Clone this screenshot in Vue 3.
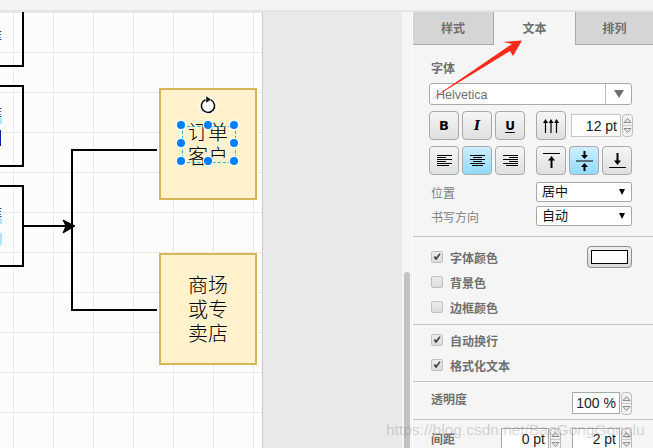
<template>
  <div class="page">
    <svg class="defs" width="0" height="0">
      <symbol id="spin" viewBox="0 0 11 23">
        <rect x="0.5" y="0.5" width="10" height="22" rx="3" fill="#f1f1f1" stroke="#bdbdbd" />
        <line x1="1" y1="11.5" x2="10" y2="11.5" stroke="#c8c8c8" />
        <path d="M5.5 4.5 L9 8.5 H2 Z" fill="#e6e6e6" stroke="#777" stroke-width="0.8" />
        <path d="M5.5 18.5 L9 14.5 H2 Z" fill="#e6e6e6" stroke="#777" stroke-width="0.8" />
      </symbol>
      <symbol id="tick" viewBox="0 0 12 12">
        <path d="M2.5 6.5 L5 9.5 L10 2.5 L8.8 2 L5 7 L3.6 5.2 Z" fill="#3c3c3c" stroke="#3c3c3c" stroke-width="0.7" />
      </symbol>
    </svg>

    <div class="topbar"></div>

    <div class="main">
      <div class="canvas">
        <div class="frag-box frag-one">
          <span class="cut-text cut-one">库</span>
        </div>
        <div class="frag-box frag-two">
          <span class="cut-text cut-two">库</span>
          <i class="mark mark-cyan mark-a"></i>
          <i class="mark mark-navy mark-b"></i>
        </div>
        <div class="frag-box frag-three">
          <span class="cut-text cut-two">库</span>
          <i class="mark mark-cyan mark-a"></i>
          <i class="mark mark-cyan mark-c"></i>
        </div>

        <svg class="wires" width="262" height="436" viewBox="0 0 262 436">
          <path d="M157 138 H72 V298 H157" fill="none" stroke="#000" stroke-width="2" />
          <path d="M24 214 H66" fill="none" stroke="#000" stroke-width="2" />
          <path d="M75 214 L63 208 L66 214 L63 221 Z" fill="#000" stroke="#000" />
        </svg>

        <div v-for="n in nodes" :key="n.id" class="node" :style="{ top: n.top + 'px' }">
          <span v-for="line in n.lines" :key="line">{{ line }}</span>
        </div>

        <div class="selection">
          <i v-for="h in handles" :key="h.id" class="handle" :style="{ left: h.x + 'px', top: h.y + 'px' }"></i>
        </div>

        <svg class="rotate" width="20" height="20" viewBox="0 0 20 20">
          <circle cx="10" cy="10.5" r="9" fill="#fff" opacity="0.9" />
          <path d="M7.4 4.8 A6.6 6.6 0 1 0 12.8 4.9" fill="none" stroke="#111" stroke-width="1.6" />
          <path d="M8.2 1.2 L13 4.4 L8.2 7.8 Z" fill="#111" />
        </svg>
      </div>

      <div class="gutter"></div>
      <div class="track"><div class="thumb"></div></div>

      <div class="panel">
        <div class="tabs">
          <div class="tab tab-first">样式</div>
          <div class="tab tab-active">文本</div>
          <div class="tab tab-last">排列</div>
        </div>

        <section class="sec sec-font">
          <div class="head">字体</div>
          <div class="font-select">
            <span class="font-name">Helvetica</span>
            <span class="font-drop"><i class="tri-big"></i></span>
          </div>

          <div class="tools tools-first">
            <div class="group">
              <button class="btn btn-b">B</button>
              <button class="btn btn-i">I</button>
              <button class="btn btn-u">U</button>
            </div>
            <div class="group group-right">
              <button class="btn">
                <svg width="16" height="16" viewBox="0 0 16 16">
                  <g fill="none" stroke="#000" stroke-width="1.2">
                    <path d="M2.5 15 V3 M8 15 V3 M13.5 15 V3" />
                  </g>
                  <path d="M2.5 1 L5 5 H0 Z M8 1 L10.5 5 H5.5 Z M13.5 1 L16 5 H11 Z" fill="#000" />
                </svg>
              </button>
              <div class="num num-size">12 pt</div>
              <svg class="spin" width="11" height="23"><use href="#spin" /></svg>
            </div>
          </div>

          <div class="tools">
            <div class="group">
              <button class="btn">
                <svg width="15" height="12" viewBox="0 0 15 12">
                  <path d="M0 .5 H15 M0 2.5 H9 M0 4.5 H15 M0 6.5 H9 M0 8.5 H15 M0 10.5 H12" stroke="#000" fill="none" />
                </svg>
              </button>
              <button class="btn btn-on">
                <svg width="15" height="12" viewBox="0 0 15 12">
                  <path d="M0 .5 H15 M3 2.5 H12 M0 4.5 H15 M3 6.5 H12 M0 8.5 H15 M2 10.5 H13" stroke="#000" fill="none" />
                </svg>
              </button>
              <button class="btn">
                <svg width="15" height="12" viewBox="0 0 15 12">
                  <path d="M0 .5 H15 M6 2.5 H15 M0 4.5 H15 M6 6.5 H15 M0 8.5 H15 M3 10.5 H15" stroke="#000" fill="none" />
                </svg>
              </button>
            </div>
            <div class="group group-right group-valign">
              <button class="btn">
                <svg width="17" height="15" viewBox="0 0 17 15">
                  <path d="M0 .5 H17" stroke="#000" fill="none" />
                  <path d="M8.5 15 V6" stroke="#000" stroke-width="2" fill="none" />
                  <path d="M8.5 3 L12 7.5 H5 Z" fill="#000" />
                </svg>
              </button>
              <button class="btn btn-on">
                <svg width="17" height="20" viewBox="0 0 17 20">
                  <path d="M0 10 H17" stroke="#000" fill="none" />
                  <path d="M8.5 0 V5 M8.5 15 V20" stroke="#000" stroke-width="2" fill="none" />
                  <path d="M8.5 8 L5 4 H12 Z M8.5 12 L12 16 H5 Z" fill="#000" />
                </svg>
              </button>
              <button class="btn">
                <svg width="17" height="15" viewBox="0 0 17 15">
                  <path d="M0 14.5 H17" stroke="#000" fill="none" />
                  <path d="M8.5 0 V9" stroke="#000" stroke-width="2" fill="none" />
                  <path d="M8.5 12 L5 7.5 H12 Z" fill="#000" />
                </svg>
              </button>
            </div>
          </div>

          <div class="pick pick-first">
            <span class="lbl">位置</span>
            <div class="combo">居中<i class="tri"></i></div>
          </div>
          <div class="pick pick-next">
            <span class="lbl">书写方向</span>
            <div class="combo">自动<i class="tri"></i></div>
          </div>
        </section>

        <section class="sec sec-colors">
          <div v-for="c in colorRows" :key="c.label" class="check-row">
            <span class="box">
              <svg v-if="c.on" width="12" height="12"><use href="#tick" /></svg>
            </span>
            <span class="check-text">{{ c.label }}</span>
            <div v-if="c.swatch" class="swatch"><i></i></div>
          </div>
        </section>

        <section class="sec sec-wrap">
          <div v-for="c in wrapRows" :key="c" class="check-row">
            <span class="box">
              <svg width="12" height="12"><use href="#tick" /></svg>
            </span>
            <span class="check-text">{{ c }}</span>
          </div>
        </section>

        <section class="sec sec-alpha">
          <span class="head">透明度</span>
          <div class="num-wrap">
            <div class="num">100 %</div>
            <svg class="spin" width="11" height="23"><use href="#spin" /></svg>
          </div>
        </section>

        <section class="sec sec-gap">
          <span class="head">间距</span>
          <div class="gap-fields">
            <div class="num-wrap">
              <div class="num">0 pt</div>
              <svg class="spin" width="11" height="23"><use href="#spin" /></svg>
            </div>
            <div class="num-wrap">
              <div class="num">2 pt</div>
              <svg class="spin" width="11" height="23"><use href="#spin" /></svg>
            </div>
          </div>
        </section>
      </div>
    </div>

    <svg class="red-arrow" width="110" height="75" viewBox="0 0 110 75">
      <path d="M0 70 L82 14 L73 12 L92 10.5 L83 26 L80 21 Z" fill="#ff2a1a" />
    </svg>

    <div class="watermark">https://blog.csdn.net/BaoGongGonglu</div>
  </div>
</template>

<script setup>
const nodes = [
  { id: 'order', top: 76, lines: ['订单', '客户'] },
  { id: 'shop', top: 241, lines: ['商场', '或专', '卖店'] },
]

const handles = [
  { id: 1, x: 0, y: 0 },
  { id: 2, x: 27, y: 0 },
  { id: 3, x: 53, y: 0 },
  { id: 4, x: 0, y: 18 },
  { id: 5, x: 53, y: 18 },
  { id: 6, x: 0, y: 36 },
  { id: 7, x: 27, y: 36 },
  { id: 8, x: 53, y: 36 },
]

const colorRows = [
  { label: '字体颜色', on: true, swatch: true },
  { label: '背景色', on: false },
  { label: '边框颜色', on: false },
]

const wrapRows = ['自动换行', '格式化文本']
</script>

<style>
html,
body {
  margin: 0;
  background: #fff;
}
</style>

<style scoped>
.page {
  position: relative;
  width: 653px;
  height: 448px;
  overflow: hidden;
  display: flex;
  flex-direction: column;
  font-family: "Liberation Sans", "Noto Sans CJK SC", sans-serif;
}

.defs {
  position: absolute;
}

.topbar {
  height: 10px;
  flex: none;
  background: #f4f4f4;
  border-bottom: 2px solid #e4e4e4;
}

.main {
  flex: 1;
  display: flex;
  min-height: 0;
}

.canvas {
  position: relative;
  width: 262px;
  flex: none;
  overflow: hidden;
  border-right: 1px solid #cdcdcd;
  background-color: #fff;
  background-image:
    linear-gradient(#e9e9e9 1px, transparent 1px),
    linear-gradient(90deg, #e9e9e9 1px, transparent 1px),
    linear-gradient(#f9f9f9 1px, transparent 1px),
    linear-gradient(90deg, #f9f9f9 1px, transparent 1px);
  background-size: 40px 40px, 40px 40px, 8px 8px, 8px 8px;
  background-position: 13px 0, 13px 0, 5px 0, 5px 0;
}

.frag-box {
  position: absolute;
  left: -10px;
  width: 30px;
  border: 2px solid #000;
  box-sizing: content-box;
}

.frag-one {
  top: -20px;
  height: 71px;
}

.frag-two {
  top: 73px;
  height: 78px;
}

.frag-three {
  top: 173px;
  height: 78px;
}

.cut-text {
  position: absolute;
  left: -2px;
  font-size: 12px;
  line-height: 14px;
  color: #00205e;
  font-family: "Noto Sans CJK SC", sans-serif;
}

.cut-one {
  top: 35px;
}

.cut-two {
  top: 19px;
}

.mark {
  position: absolute;
  left: 8px;
  width: 2px;
}

.mark-cyan {
  background: #a6e8ff;
}

.mark-navy {
  background: #0a1ea0;
  width: 1px;
}

.mark-a {
  top: 31px;
  height: 6px;
}

.mark-b {
  top: 43px;
  height: 16px;
}

.mark-c {
  top: 46px;
  height: 12px;
}

.wires {
  position: absolute;
  left: 0;
  top: 0;
}

.node {
  position: absolute;
  left: 159px;
  width: 98px;
  height: 112px;
  box-sizing: border-box;
  border: 2px solid #d6b656;
  background: #fff2cc;
  display: flex;
  flex-direction: column;
  align-items: center;
  justify-content: center;
  font-family: "Noto Sans CJK SC", sans-serif;
  font-size: 20px;
  font-weight: 300;
  line-height: 24px;
  color: #000;
}

.selection {
  position: absolute;
  left: 182px;
  top: 114px;
  width: 52px;
  height: 35px;
  border: 1px dashed #19b4ee;
}

.handle {
  position: absolute;
  width: 8px;
  height: 8px;
  margin: -6px 0 0 -6px;
  border-radius: 50%;
  background: #007fff;
  box-shadow: 0 0 0 1.5px rgba(255, 255, 255, 0.9);
}

.rotate {
  position: absolute;
  left: 198px;
  top: 83px;
}

.gutter {
  flex: 1;
  background: #e9e9e9;
}

.track {
  position: relative;
  width: 10px;
  flex: none;
  background: #f5f5f5;
  margin-right: 1px;
}

.thumb {
  position: absolute;
  left: 2px;
  right: 2px;
  top: 260px;
  bottom: 0;
  background: #c2c2c2;
  border-radius: 3px 3px 0 0;
}

.panel {
  width: 240px;
  flex: none;
  background: #f5f5f5;
  color: #707070;
  font-size: 12px;
  overflow: hidden;
}

.tabs {
  display: flex;
  height: 33px;
}

.tab {
  box-sizing: border-box;
  text-align: center;
  line-height: 35px;
  font-weight: 700;
  font-size: 12px;
  color: #707070;
  background: #d5d5d5;
  border-bottom: 1px solid #ababab;
}

.tab-first {
  width: 81px;
  border-right: 1px solid #ababab;
}

.tab-active {
  width: 81px;
  background: #f5f5f5;
  border-bottom: 0;
}

.tab-last {
  flex: 1;
  border-left: 1px solid #ababab;
}

.sec {
  padding-left: 16px;
  padding-right: 21px;
  border-bottom: 1px solid #c4c4c4;
}

.head {
  font-weight: 700;
  line-height: 16px;
  padding-left: 2px;
  color: #707070;
}

.sec-font {
  padding-top: 16px;
  padding-bottom: 10px;
}

.font-select {
  margin-top: 6px;
  height: 22px;
  box-sizing: border-box;
  display: flex;
  align-items: center;
  background: #fff;
  border: 1px solid #a9a9a9;
  border-radius: 3px;
}

.font-name {
  flex: 1;
  padding-left: 6px;
  padding-top: 2px;
  font-size: 12.5px;
  color: #707070;
}

.font-drop {
  width: 25px;
  height: 100%;
  display: flex;
  align-items: center;
  justify-content: center;
  border-left: 1px solid #bdbdbd;
}

.tri-big {
  width: 0;
  height: 0;
  border-left: 5px solid transparent;
  border-right: 5px solid transparent;
  border-top: 8px solid #707070;
}

.tools {
  display: flex;
  margin-top: 6px;
  height: 29px;
}

.group {
  display: flex;
  gap: 3px;
  align-items: center;
}

.group-right {
  margin-left: 11px;
  gap: 0;
}

.group-valign {
  gap: 3px;
}

.btn {
  width: 30px;
  height: 29px;
  padding: 0;
  box-sizing: border-box;
  display: flex;
  align-items: center;
  justify-content: center;
  border: 1px solid #a9a9a9;
  border-radius: 4px;
  background: linear-gradient(#f6f6f6, #dfdfdf);
  color: #000;
  font-size: 13px;
  line-height: 1;
}

.btn-b {
  font-family: "DejaVu Sans", sans-serif;
  font-weight: 700;
}

.btn-i {
  font-family: "DejaVu Serif", serif;
  font-weight: 700;
  font-style: italic;
}

.btn-u {
  font-family: "DejaVu Sans", sans-serif;
  font-weight: 700;
  font-size: 12px;
  text-decoration: underline;
  text-underline-offset: 2px;
}

.btn-on {
  background: linear-gradient(#cdeeff, #8fdbff);
}

.num {
  box-sizing: border-box;
  width: 48px;
  height: 22px;
  padding-right: 3px;
  background: #fff;
  border: 1px solid #a9a9a9;
  color: #1a1a1a;
  font-size: 14px;
  line-height: 21px;
  text-align: right;
}

.num-size {
  width: 50px;
  height: 23px;
  margin-left: 5px;
  line-height: 22px;
  border-color: #c6c6c6;
}

.spin {
  display: block;
  flex: none;
  margin-left: 1px;
}

.pick {
  display: flex;
  align-items: center;
  justify-content: space-between;
  padding-left: 2px;
  color: #808080;
}

.pick-first {
  margin-top: 7px;
}

.pick-next {
  margin-top: 4px;
}

.combo {
  position: relative;
  box-sizing: border-box;
  width: 96px;
  height: 20px;
  padding-left: 5px;
  background: #fff;
  border: 1px solid #a9a9a9;
  border-radius: 2px;
  color: #111;
  font-size: 13px;
  line-height: 18px;
}

.tri {
  position: absolute;
  right: 6px;
  top: 6px;
  width: 0;
  height: 0;
  border-left: 3.5px solid transparent;
  border-right: 3.5px solid transparent;
  border-top: 6px solid #000;
}

.sec-colors {
  padding-top: 7px;
  padding-bottom: 5px;
}

.sec-wrap {
  padding-top: 2px;
  padding-bottom: 4px;
}

.check-row {
  display: flex;
  align-items: center;
  height: 25px;
  padding-left: 2px;
}

.box {
  box-sizing: border-box;
  width: 12px;
  height: 12px;
  flex: none;
  display: flex;
  align-items: center;
  justify-content: center;
  border: 1px solid #c0c0c0;
  border-radius: 2px;
  background: linear-gradient(#ececec, #dcdcdc);
}

.check-text {
  margin-left: 7px;
  padding-top: 1px;
  font-weight: 700;
  color: #707070;
}

.swatch {
  box-sizing: border-box;
  margin-left: auto;
  width: 45px;
  height: 22px;
  padding: 3px;
  border: 1px solid #8e8e8e;
  border-radius: 4px;
  background: linear-gradient(#efefef, #dcdcdc);
}

.swatch i {
  display: block;
  box-sizing: border-box;
  height: 100%;
  background: #fff;
  border: 1px solid #000;
}

.sec-alpha {
  display: flex;
  align-items: flex-start;
  justify-content: space-between;
  padding-top: 10px;
  padding-bottom: 4px;
}

.num-wrap {
  display: flex;
  align-items: flex-start;
}

.sec-gap {
  display: flex;
  align-items: center;
  justify-content: space-between;
  padding-top: 8px;
  border-bottom: 0;
}

.gap-fields {
  display: flex;
  gap: 11px;
}

.red-arrow {
  position: absolute;
  left: 430px;
  top: 30px;
  pointer-events: none;
}

.watermark {
  position: absolute;
  left: 386px;
  top: 421px;
  width: 262px;
  white-space: nowrap;
  font-size: 15.5px;
  line-height: 18px;
  color: rgba(110, 110, 110, 0.28);
  pointer-events: none;
}
</style>
